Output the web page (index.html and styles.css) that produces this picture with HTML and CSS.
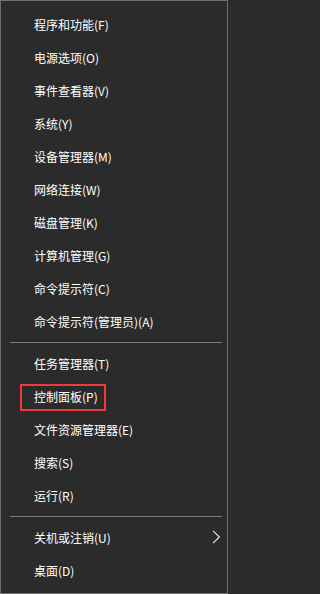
FILE: index.html
```html
<!DOCTYPE html>
<html lang="zh-CN">
<head>
<meta charset="utf-8">
<title>Win+X 菜单</title>
<link rel="stylesheet" href="styles.css">
</head>
<body>
<div class="menu">
  <div class="item">程序和功能(F)</div>
  <div class="item">电源选项(O)</div>
  <div class="item">事件查看器(V)</div>
  <div class="item">系统(Y)</div>
  <div class="item">设备管理器(M)</div>
  <div class="item">网络连接(W)</div>
  <div class="item">磁盘管理(K)</div>
  <div class="item">计算机管理(G)</div>
  <div class="item">命令提示符(C)</div>
  <div class="item">命令提示符(管理员)(A)</div>
  <div class="sep"></div>
  <div class="item">任务管理器(T)</div>
  <div class="item highlight">控制面板(P)</div>
  <div class="item">文件资源管理器(E)</div>
  <div class="item">搜索(S)</div>
  <div class="item">运行(R)</div>
  <div class="sep"></div>
  <div class="item">关机或注销(U)<svg class="chev" width="9" height="14" viewBox="0 0 9 14"><path d="M1 0.8 L7.4 7 L1 13.2" fill="none" stroke="#e8e8e8" stroke-width="1.1"/></svg></div>
  <div class="item">桌面(D)</div>
</div>
</body>
</html>
```

FILE: styles.css
```css
html, body {
  margin: 0;
  padding: 0;
  background: #2b2b2b;
}
.menu {
  box-sizing: border-box;
  width: 228px;
  height: 594px;
  border: 1px solid #6f6f6f;
  background: #2b2b2b;
  padding-top: 7px;
  font-family: "Noto Sans CJK SC", "Noto Sans", sans-serif;
  font-size: 12px;
  color: #ffffff;
}
.item {
  position: relative;
  display: flex;
  align-items: center;
  height: 33px;
  padding-left: 33px;
  padding-right: 6px;
  line-height: 16px;
}
.sep {
  height: 9px;
  display: flex;
  align-items: center;
  padding: 0 5px 0 9px;
}
.sep::before {
  content: "";
  flex: 1;
  height: 1px;
  background: #7b7b7b;
}
.chev {
  margin-left: auto;
  margin-top: -1px;
}
.highlight::after {
  content: "";
  position: absolute;
  left: 19px;
  top: 4px;
  width: 86px;
  height: 27px;
  box-sizing: border-box;
  border: 2px solid #ee3a3c;
}
```
